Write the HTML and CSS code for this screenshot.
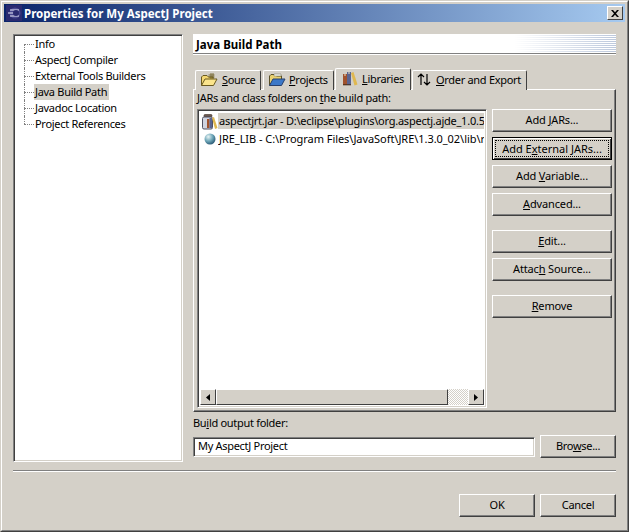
FILE: index.html
```html
<!DOCTYPE html>
<html lang="en">
<head>
<meta charset="utf-8">
<title>Properties for My AspectJ Project</title>
<link rel="stylesheet" href="styles.css">
</head>
<body>
<div class="window"><div class="window-inner">
  <div class="titlebar">
    <svg class="title-icon" width="16" height="16" viewBox="0 0 16 16"><rect width="16" height="16" fill="#2a2a70"/><circle cx="9" cy="8" r="5.5" fill="#47478f"/><path d="M4 5h9M2 8h10M4 11h9" stroke="#e8e8f8" stroke-width="1.2"/><circle cx="10" cy="8" r="3" fill="#2a2a70"/></svg>
    <span class="title-text">Properties for My AspectJ Project</span>
    <span class="close"><svg width="8" height="7" viewBox="0 0 8 7"><path d="M0 0l3 3.500-3 3.500h2l2-2.300 2 2.300h2l-3-3.500 3-3.500h-2l-2 2.300-2-2.300z" fill="#000"/></svg></span>
  </div>
  <div class="content">
    <div class="main">
      <ul class="tree">
        <li class="tree-item"><span class="tree-label">Info</span></li>
        <li class="tree-item"><span class="tree-label">AspectJ Compiler</span></li>
        <li class="tree-item"><span class="tree-label">External Tools Builders</span></li>
        <li class="tree-item"><span class="tree-label selected">Java Build Path</span></li>
        <li class="tree-item"><span class="tree-label">Javadoc Location</span></li>
        <li class="tree-item"><span class="tree-label">Project References</span></li>
      </ul>
      <div class="page">
        <div class="page-header"><span class="page-title">Java Build Path</span></div>
        <div class="tabs">
          <div class="tab tab-source">
            <svg width="18" height="16" viewBox="0 0 18 16"><path d="M1.500 13.500V5l1.500-1.500h4L8.500 5H13v2" fill="#f4d874" stroke="#6a5a20"/><path d="M1.500 13.500L5 7h12l-3.500 6.500z" fill="#fbe58c" stroke="#6a5a20"/><path d="M11 1v6M8.500 3h6M8.500 5h6M13 1v5" stroke="#6a5a20" stroke-width=".8"/></svg>
            <span><u>S</u>ource</span>
          </div>
          <div class="tab tab-projects">
            <svg width="18" height="16" viewBox="0 0 18 16"><path d="M1.500 13.500V4l1.500-1.500h4L8.500 4h5v3" fill="#e8d070" stroke="#5a5028"/><path d="M1.500 13.500L5 7h12l-3.500 6.500z" fill="#3c78c8" stroke="#28406c"/><path d="M6 2h7v2H6z" fill="#f8f8f0" stroke="#707060" stroke-width=".5"/></svg>
            <span><u>P</u>rojects</span>
          </div>
          <div class="tab tab-active">
            <svg width="18" height="17" viewBox="0 0 18 17"><rect x="2" y="4" width="4" height="11" fill="#a0522d"/><rect x="6" y="2" width="4" height="13" fill="#5a6490"/><path d="M10 3l2.500-1 4 12.500-3 1z" fill="#e0b850"/><path d="M2 14.800h8" stroke="#402818"/><path d="M3 5h2M7 3h2" stroke="#f0e0c0"/></svg>
            <span><u>L</u>ibraries</span>
          </div>
          <div class="tab tab-order">
            <svg width="14" height="13" viewBox="0 0 14 13"><path d="M4 12V1M1 4l3-3 3 3M10 1v11M7 9l3 3 3-3" fill="none" stroke="#000" stroke-width="1.200"/></svg>
            <span><u>O</u>rder and Export</span>
          </div>
        </div>
        <div class="panel">
          <div class="panel-label">JARs and class folders on <u>t</u>he build path:</div>
          <div class="panel-body">
            <div class="list">
              <div class="list-rows">
                <div class="row row-jar">
                  <svg class="row-icon" width="16" height="17" viewBox="0 0 16 17"><rect x="2" y="1.500" width="8" height="2.500" rx="1" fill="#6c5a50" stroke="#403028" stroke-width=".6"/><rect x=".5" y="4" width="10" height="12" rx="1.500" fill="#d0d4e0" stroke="#505060"/><rect x="5" y="6" width="2.500" height="9" fill="#a0522d"/><rect x="7.500" y="5" width="2.500" height="10" fill="#5a6490"/><path d="M10 5l2-1 3.500 11-2.500 1z" fill="#e0b850"/></svg>
                  <span class="row-text selected">aspectjrt.jar - D:\eclipse\plugins\org.aspectj.ajde_1.0.5</span>
                </div>
                <div class="row row-jre">
                  <svg class="row-icon" width="16" height="16" viewBox="0 0 16 16"><defs><radialGradient id="ball" cx=".35" cy=".3" r=".8"><stop offset="0" stop-color="#e8f4f4"/><stop offset=".5" stop-color="#6ea6b8"/><stop offset="1" stop-color="#1c4a68"/></radialGradient></defs><circle cx="8" cy="8" r="5.500" fill="url(#ball)"/></svg>
                  <span class="row-text">JRE_LIB - C:\Program Files\JavaSoft\JRE\1.3.0_02\lib\r</span>
                </div>
              </div>
              <div class="hscroll">
                <span class="sb-btn"><svg width="4" height="7" viewBox="0 0 4 7"><path d="M4 0v7L0 3.500z"/></svg></span>
                <span class="sb-thumb"></span>
                <span class="sb-track"></span>
                <span class="sb-btn"><svg width="4" height="7" viewBox="0 0 4 7"><path d="M0 0v7l4-3.500z"/></svg></span>
              </div>
            </div>
            <div class="side-buttons">
              <div class="btn-group">
                <button class="btn side-btn"><span>Add <u>J</u>ARs...</span></button>
                <button class="btn side-btn focused"><span class="focus-ring"><span>Add E<u>x</u>ternal JARs...</span></span></button>
                <button class="btn side-btn"><span>Add <u>V</u>ariable...</span></button>
                <button class="btn side-btn"><span><u>A</u>dvanced...</span></button>
              </div>
              <div class="btn-group">
                <button class="btn side-btn"><span><u>E</u>dit...</span></button>
                <button class="btn side-btn"><span>Attac<u>h</u> Source...</span></button>
              </div>
              <div class="btn-group">
                <button class="btn side-btn"><span><u>R</u>emove</span></button>
              </div>
            </div>
          </div>
        </div>
        <div class="output-label">Bu<u>i</u>ld output folder:</div>
        <div class="output-row">
          <div class="field">My AspectJ Project</div>
          <button class="btn foot-btn"><span>Bro<u>w</u>se...</span></button>
        </div>
      </div>
    </div>
    <div class="separator"></div>
    <div class="footer">
      <button class="btn foot-btn"><span>OK</span></button>
      <button class="btn foot-btn"><span>Cancel</span></button>
    </div>
  </div>
</div></div>
</body>
</html>
```

FILE: styles.css
```css
* { box-sizing: border-box; }
html, body { margin: 0; padding: 0; }
body { width: 629px; height: 532px; overflow: hidden; background: #d4d0c8; font: 11px/13px "Noto Sans", Tahoma, sans-serif; letter-spacing: -0.3px; color: #000; }
u { text-underline-offset: 1px; text-decoration-thickness: 1px; }

.window { width: 629px; height: 532px; border: 1px solid; border-color: #d4d0c8 #404040 #404040 #d4d0c8; }
.window-inner { height: 100%; border: 1px solid; border-color: #fff #808080 #808080 #fff; padding: 2px 2px 0 2px; display: flex; flex-direction: column; }

.titlebar { height: 18px; flex: none; display: flex; align-items: center; padding: 0 2px 0 2px; background: linear-gradient(to right, #0a246a, #a6caf0); }
.title-icon { flex: none; }
.title-text { margin-left: 2px; font-weight: 700; font-size: 11.5px; letter-spacing: 0; color: #fff; flex: 1; }
.close { width: 16px; height: 14px; display: flex; align-items: center; justify-content: center; background: #d4d0c8; border: 1px solid; border-color: #fff #404040 #404040 #fff; }

.content { flex: 1; padding: 12px 9px 0 9px; display: flex; flex-direction: column; }
.main { display: flex; gap: 10px; height: 428px; flex: none; }

.tree { width: 170px; flex: none; height: 100%; margin: 0; padding: 1px 0 0 0; list-style: none; background: #fff; border: 1px solid; border-color: #808080 #fff #fff #808080; box-shadow: inset 1px 1px 0 #404040, inset -1px -1px 0 #d4d0c8; }
.tree-item { height: 16px; display: flex; align-items: center; padding-left: 20px; position: relative; }
.tree-item::before { content: ""; position: absolute; left: 10px; width: 10px; top: 8px; border-top: 1px dotted #808080; }
.tree-item::after { content: ""; position: absolute; left: 10px; top: 0; height: 16px; border-left: 1px dotted #808080; }
.tree-item:first-child::after { top: 8px; height: 8px; }
.tree-item:last-child::after { height: 8px; }
.tree-label { padding: 0 2px 0 1px; height: 16px; line-height: 15px; white-space: nowrap; }
.selected { background: #d4d0c8; }

.page { flex: 1; min-width: 0; display: flex; flex-direction: column; }
.page-header { height: 21px; flex: none; display: flex; align-items: center; padding-left: 3px; border-bottom: 1px solid #fff; box-shadow: inset 0 -1px 0 #808080;
  background: linear-gradient(to right, #fff 0, #fff 76%, rgba(255,255,255,0) 100%), repeating-linear-gradient(to bottom, #fff 0, #fff 1px, #bcc8dc 1px, #bcc8dc 2px); }
.page-title { font-weight: 700; font-size: 11.5px; letter-spacing: 0; }

.tabs { height: 34px; flex: none; display: flex; align-items: flex-end; padding-left: 2px; gap: 1px; position: relative; z-index: 1; }
.tab { height: 20px; margin-bottom: -1px; display: flex; align-items: center; gap: 4px; padding: 0 0 2px 4px; background: #d4d0c8; border: 1px solid; border-color: #fff #404040 transparent #fff; border-bottom: 0; border-radius: 2px 2px 0 0; white-space: nowrap; }
.tab-source { width: 66px; }
.tab-projects { width: 71px; margin-left: 1px; gap: 3px; }
.tab-active { width: 76px; height: 22px; padding: 0 0 3px 5px; gap: 3px; }
.tab-order { width: 115px; gap: 5px; }

.panel { height: 323px; flex: none; border: 1px solid; border-color: #fff #404040 #404040 #fff; box-shadow: inset -1px -1px 0 #808080; padding: 2px 3px 0 3px; }
.panel-label { height: 17px; line-height: 12px; }
.panel-body { display: flex; gap: 5px; }

.list { width: 290px; height: 299px; flex: none; background: #fff; border: 1px solid; border-color: #808080 #fff #fff #808080; box-shadow: inset 1px 1px 0 #404040, inset -1px -1px 0 #d4d0c8; padding: 2px; display: flex; flex-direction: column; overflow: hidden; }
.list-rows { flex: 1; overflow: hidden; }
.row { height: 18px; display: flex; align-items: center; padding-left: 2px; white-space: nowrap; }
.row-jar { letter-spacing: -0.24px; }
.row-jre { letter-spacing: -0.05px; }
.row-icon { flex: none; }
.row-text { flex: 1; padding-left: 1px; height: 16px; line-height: 15px; overflow: hidden; }
.hscroll { height: 16px; flex: none; display: flex; }
.sb-btn { width: 16px; flex: none; display: flex; align-items: center; justify-content: center; background: #d4d0c8; border: 1px solid; border-color: #fff #404040 #404040 #fff; }
.sb-thumb { width: 232px; flex: none; background: #d4d0c8; border: 1px solid; border-color: #fff #404040 #404040 #fff; }
.sb-track { flex: 1; background: repeating-conic-gradient(#d4d0c8 0 25%, #fff 0 50%) 0 0 / 2px 2px; }

.side-buttons { display: flex; flex-direction: column; gap: 14px; letter-spacing: -0.15px; }
.btn-group { display: flex; flex-direction: column; gap: 5px; }
.btn { font: inherit; letter-spacing: inherit; color: #000; padding: 0 0 2px 0; background: #d4d0c8; border: 1px solid; border-color: #fff #404040 #404040 #fff; box-shadow: inset -1px -1px 0 #808080; display: flex; align-items: center; justify-content: center; white-space: nowrap; }
.side-btn { width: 120px; height: 23px; }
.focused { border-color: #000; box-shadow: inset 1px 1px 0 #fff, inset -1px -1px 0 #404040; padding: 3px; letter-spacing: 0; }
.focus-ring { flex: 1; align-self: stretch; display: flex; align-items: center; justify-content: center; padding-bottom: 1px; outline: 1px dotted #000; outline-offset: 0; }

.output-label { height: 23px; flex: none; padding-top: 4px; }
.output-row { display: flex; gap: 5px; align-items: center; }
.field { width: 342px; height: 20px; flex: none; background: #fff; padding-left: 4px; line-height: 16px; border: 1px solid; border-color: #808080 #fff #fff #808080; box-shadow: inset 1px 1px 0 #404040, inset -1px -1px 0 #d4d0c8; }
.foot-btn { width: 76px; height: 23px; }

.separator { flex: none; margin: 8px 0 0 0; height: 2px; border-top: 1px solid #808080; border-bottom: 1px solid #fff; }
.footer { flex: none; margin-top: 22px; display: flex; justify-content: flex-end; gap: 5px; }
```
